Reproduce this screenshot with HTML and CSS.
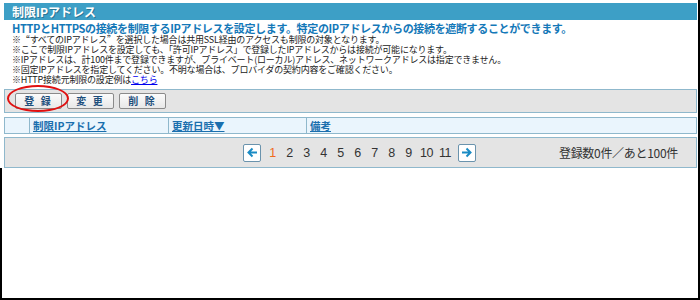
FILE: index.html
```html
<!DOCTYPE html>
<html lang="ja">
<head>
<meta charset="utf-8">
<link rel="stylesheet" href="styles.css">
</head>
<body>
<div class="page">
  <div class="title">制限IPアドレス</div>
  <div class="intro">
    <p class="lead">HTTPとHTTPSの接続を制限するIPアドレスを設定します。特定のIPアドレスからの接続を遮断することができます。</p>
    <p class="note">※<span class="fw">“</span>すべてのIPアドレス<span class="fw">”</span>を選択した場合は共用SSL経由のアクセスも制限の対象となります。</p>
    <p class="note">※ここで制限IPアドレスを設定しても、「許可IPアドレス」で登録したIPアドレスからは接続が可能になります。</p>
    <p class="note">※IPアドレスは、計100件まで登録できますが、プライベート(ローカル)アドレス、ネットワークアドレスは指定できません。</p>
    <p class="note">※固定IPアドレスを指定してください。不明な場合は、プロバイダの契約内容をご確認ください。</p>
    <p class="note">※HTTP接続元制限の設定例は<a class="here" href="#">こちら</a></p>
  </div>
  <div class="toolbar">
    <span class="btn-wrap"><button class="btn">登 録</button><span class="circle"></span></span>
    <button class="btn">変 更</button>
    <button class="btn">削 除</button>
  </div>
  <div class="thead">
    <div class="th th-check"></div>
    <div class="th th-ip"><a href="#">制限IPアドレス</a></div>
    <div class="th th-date"><a href="#">更新日時▼</a></div>
    <div class="th th-memo"><a href="#">備考</a></div>
  </div>
  <div class="pager">
    <div class="pages">
      <span class="arrow prev"><svg width="11" height="11" viewBox="0 0 11 11"><path d="M10 5.5H2M5.5 1.5L1.5 5.5L5.5 9.5" fill="none" stroke="#1a8bc4" stroke-width="2"/></svg></span>
      <span class="num current">1</span>
      <span class="num">2</span>
      <span class="num">3</span>
      <span class="num">4</span>
      <span class="num">5</span>
      <span class="num">6</span>
      <span class="num">7</span>
      <span class="num">8</span>
      <span class="num">9</span>
      <span class="num">10</span>
      <span class="num">11</span>
      <span class="arrow next"><svg width="11" height="11" viewBox="0 0 11 11"><path d="M1 5.5H9M5.5 1.5L9.5 5.5L5.5 9.5" fill="none" stroke="#1a8bc4" stroke-width="2"/></svg></span>
    </div>
    <div class="count">登録数0件／あと100件</div>
  </div>
  <div class="blank"></div>
</div>
</body>
</html>
```

FILE: styles.css
```css
html, body {
  margin: 0;
  padding: 0;
  background: #fff;
}
.page {
  box-sizing: border-box;
  width: 700px;
  height: 300px;
  padding: 3px 1px 0 4px;
  border-right: 2px solid #000;
  border-bottom: 2px solid #000;
  display: flex;
  flex-direction: column;
  font-family: "Noto Sans CJK JP", "Noto Sans", sans-serif;
  color: #222;
}
.title {
  height: 17px;
  background: #3d9fc6;
  color: #fff;
  font-size: 12px;
  font-weight: bold;
  line-height: 17px;
  padding-left: 8px;
  text-shadow: 1px 1px 0 #2a7796;
}
.intro {
  padding: 2px 0 0 8px;
}
.intro p {
  margin: 0;
}
.lead {
  font-size: 11px;
  font-weight: bold;
  color: #1478b8;
  line-height: 13px;
  letter-spacing: -0.35px;
  white-space: nowrap;
}
.note {
  font-size: 9px;
  line-height: 10px;
  height: 10px;
  color: #222;
  letter-spacing: -0.2px;
  white-space: nowrap;
}
.fw {
  font-feature-settings: "fwid" 1;
}
.here {
  color: #0000ee;
  text-decoration: underline;
}
.toolbar {
  margin-top: 4px;
  height: 22px;
  background: #e4e4e4;
  border: 1px solid #8fb8cc;
  display: flex;
  align-items: center;
  gap: 5px;
  padding-left: 10px;
}
.btn-wrap {
  position: relative;
  display: flex;
}
.btn {
  width: 47px;
  height: 16px;
  padding: 0;
  border: 1px solid #8a8a8a;
  border-radius: 2px;
  background: linear-gradient(#fbfbfb, #e8e8e8);
  font-family: "Noto Sans CJK JP", sans-serif;
  font-size: 10px;
  font-weight: bold;
  color: #1d4f7c;
  line-height: 14px;
  letter-spacing: 2px;
}
.circle {
  position: absolute;
  left: -8px;
  top: -8px;
  width: 58px;
  height: 23px;
  border: 2px solid #e01010;
  border-radius: 50%;
  pointer-events: none;
}
.thead {
  margin-top: 4px;
  height: 15px;
  display: flex;
  background: #eaf5fd;
  border: 1px solid #8fb8cc;
}
.th {
  box-sizing: border-box;
  height: 15px;
  line-height: 15px;
  padding-left: 3px;
  border-right: 1px solid #8fb8cc;
  font-size: 10.5px;
  font-weight: bold;
  white-space: nowrap;
}
.th a {
  color: #1a6fae;
  text-decoration: underline;
}
.th-check { width: 25px; }
.th-ip { width: 139px; }
.th-date { width: 138px; }
.th-memo { flex: 1; border-right: 0; }
.pager {
  margin-top: 3px;
  height: 29px;
  background: #e4e4e4;
  border: 1px solid #8fb8cc;
  display: flex;
  align-items: center;
  justify-content: space-between;
  padding: 0 18px 0 238px;
}
.pages {
  display: flex;
  align-items: center;
  gap: 6px;
}
.arrow {
  box-sizing: border-box;
  width: 18px;
  height: 18px;
  background: #fff;
  border: 1px solid #6a93ad;
  border-radius: 2px;
  display: flex;
  align-items: center;
  justify-content: center;
}
.next { margin-left: 1px; }
.num {
  font-family: "Liberation Sans", Arial, sans-serif;
  font-size: 12.5px;
  color: #333;
  min-width: 11px;
  text-align: center;
  letter-spacing: -0.5px;
}
.current { color: #f06a1e; }
.count {
  font-size: 12px;
  color: #333;
  letter-spacing: -0.3px;
}
.blank {
  flex: 1;
  margin-left: -4px;
  border-left: 2px solid #000;
}
```
